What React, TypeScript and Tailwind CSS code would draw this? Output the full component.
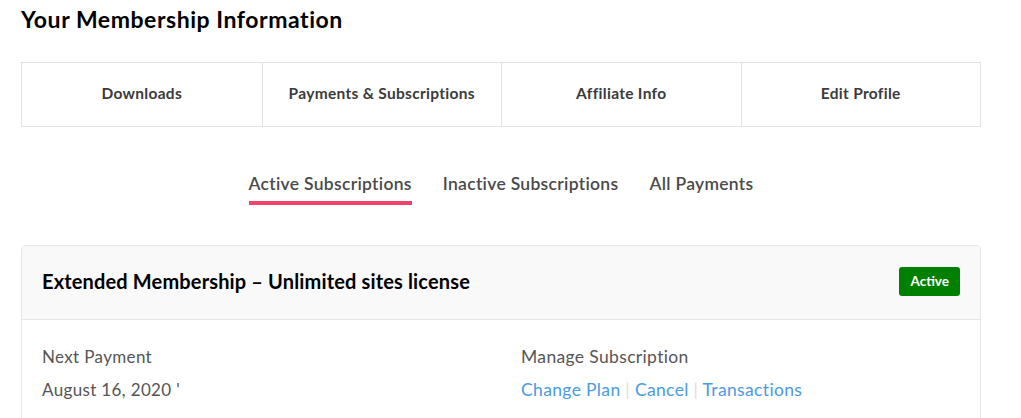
import React from "react";

export default function App() {
  const font = { fontFamily: "Lato, 'Noto Sans', sans-serif" };
  return (
    <div className="w-[1021px] h-[418px] overflow-hidden bg-white" style={font}>
      <div className="pl-[21px] pr-[40px]">
        <h1 className="pt-[5px] text-[23px] leading-[28px] font-bold tracking-[0.55px] text-black">Your Membership Information</h1>
        <div className="mt-[29px] grid grid-cols-4 border border-[#e2e2e2] h-[65px]">
          {["Downloads", "Payments & Subscriptions", "Affiliate Info", "Edit Profile"].map((t, i) => (
            <div
              key={t}
              className={`flex items-center justify-center pb-[2px] text-[15.5px] font-bold tracking-[0.3px] text-[#3b3b3b] ${i > 0 ? "border-l border-[#e2e2e2]" : ""}`}
            >
              {t}
            </div>
          ))}
        </div>
        <div className="mt-[45px] flex justify-center gap-[31px] text-[17.5px] font-semibold tracking-[0.3px] text-[#4a4a4a]">
          <div className="flex flex-col items-center">
            <span className="leading-[24px]">Active Subscriptions</span>
            <span className="mt-[5px] h-[4px] w-full bg-[#f0436b]" />
          </div>
          <span className="leading-[24px]">Inactive Subscriptions</span>
          <span className="leading-[24px]">All Payments</span>
        </div>
        <div className="mt-[40px] rounded-[4px] border border-[#e6e6e6]">
          <div className="flex h-[74px] items-center justify-between bg-[#f9f9f9] border-b border-[#e6e6e6] pl-[20px] pr-[20px] pb-[3px]">
            <span className="text-[20px] font-bold tracking-[0.15px] text-black">Extended Membership – Unlimited sites license</span>
            <span className="rounded-[3px] bg-[#008000] px-[11px] h-[29px] flex items-center text-[13.5px] font-bold text-white">Active</span>
          </div>
          <div className="flex pl-[20px] pt-[25px] h-[120px]">
            <div className="w-[479px] text-[17px] tracking-[0.35px] text-[#555]">
              <div className="leading-[24px]">Next Payment</div>
              <div className="mt-[9px] leading-[24px]">August 16, 2020 '</div>
            </div>
            <div className="text-[17.5px] tracking-[0.35px]">
              <div className="leading-[24px] text-[#555]">Manage Subscription</div>
              <div className="mt-[9px] leading-[24px] text-[#4a9be0]">
                Change Plan <span className="text-[#ddd]">|</span> Cancel <span className="text-[#ddd]">|</span> Transactions
              </div>
            </div>
          </div>
        </div>
      </div>
    </div>
  );
}
